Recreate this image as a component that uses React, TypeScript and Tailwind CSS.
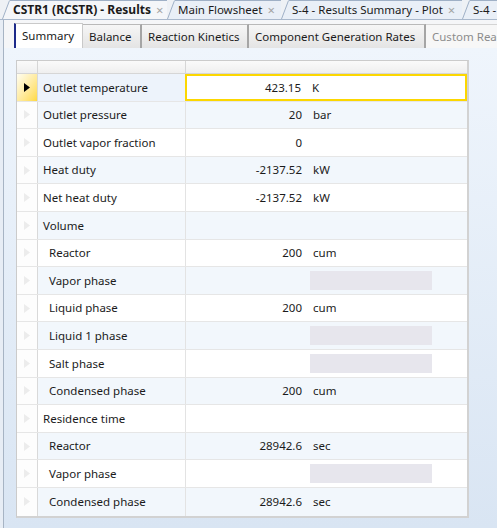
import React from 'react';

type Row = {
  label: string;
  sub?: boolean;
  value?: string;
  unit?: string;
  blank?: boolean;
};

const rows: Row[] = [
  { label: 'Outlet temperature', value: '423.15', unit: 'K' },
  { label: 'Outlet pressure', value: '20', unit: 'bar' },
  { label: 'Outlet vapor fraction', value: '0' },
  { label: 'Heat duty', value: '-2137.52', unit: 'kW' },
  { label: 'Net heat duty', value: '-2137.52', unit: 'kW' },
  { label: 'Volume' },
  { label: 'Reactor', sub: true, value: '200', unit: 'cum' },
  { label: 'Vapor phase', sub: true, blank: true },
  { label: 'Liquid phase', sub: true, value: '200', unit: 'cum' },
  { label: 'Liquid 1 phase', sub: true, blank: true },
  { label: 'Salt phase', sub: true, blank: true },
  { label: 'Condensed phase', sub: true, value: '200', unit: 'cum' },
  { label: 'Residence time' },
  { label: 'Reactor', sub: true, value: '28942.6', unit: 'sec' },
  { label: 'Vapor phase', sub: true, blank: true },
  { label: 'Condensed phase', sub: true, value: '28942.6', unit: 'sec' },
];

const docTabs = [
  { title: 'CSTR1 (RCSTR) - Results', active: true, w: 'w-[165px]' },
  { title: 'Main Flowsheet', w: 'w-[114px]' },
  { title: 'S-4 - Results Summary - Plot', w: 'w-[181px]' },
  { title: 'S-4 - Results Summary - Table', w: 'w-[200px]' },
];

const formTabs = [
  { title: 'Summary', w: 'w-[69px]', active: true },
  { title: 'Balance', w: 'w-[59px]' },
  { title: 'Reaction Kinetics', w: 'w-[107px]' },
  { title: 'Component Generation Rates', w: 'w-[177px]' },
  { title: 'Custom Reactions', w: 'w-[110px]', disabled: true },
];

function Slant({ active }: { active?: boolean }) {
  return (
    <svg width="8" height="19" viewBox="0 0 8 19" className="shrink-0">
      <path d="M0 19 L7 1 L8 1 L8 19 Z" fill={active ? '#f4f6f9' : '#e9eff7'} />
      <path d="M0.5 19 L7.5 0.5" stroke="#9fb0c6" strokeWidth="1" fill="none" />
    </svg>
  );
}

function RowHead({ current }: { current?: boolean }) {
  return (
    <div
      className={`w-[21px] shrink-0 border-r border-[#d9d9d9] flex items-center justify-center ${
        current ? 'bg-gradient-to-br from-[#fffdf0] to-[#ffd93a]' : 'bg-[#fdfdfd]'
      }`}
    >
      <svg width="6" height="9" viewBox="0 0 6 9">
        <path d="M0 0 L6 4.5 L0 9 Z" fill={current ? '#000' : '#ececec'} />
      </svg>
    </div>
  );
}

export default function App() {
  return (
    <div className="w-[497px] h-[528px] overflow-hidden flex flex-col bg-[#f1f3f6] text-[#1b1b1b] font-['Noto_Sans',sans-serif] text-[11.5px]">
      {/* document tabs */}
      <div className="h-[20px] flex items-end border-b border-[#a9b8cc] bg-[#eef1f5] pl-[2px] overflow-hidden shrink-0">
        {docTabs.map((t) => (
          <div key={t.title} className={`flex items-end h-[19px] shrink-0 ${t.w}`}>
            <Slant active={t.active} />
            <div
              className={`flex-1 h-full flex items-center gap-[5px] pl-[3px] border-t border-[#9fb0c6] whitespace-nowrap ${
                t.active ? 'bg-[#f4f6f9] font-bold text-[12px]' : 'bg-[#e9eff7]'
              }`}
            >
              <span>{t.title}</span>
              <span className="text-[#a4a4a4] text-[13px] leading-none font-normal">×</span>
            </div>
          </div>
        ))}
      </div>

      {/* form frame */}
      <div className="flex-1 flex pl-[3px] bg-[#e7edf5]">
        <div className="flex-1 flex flex-col border-l border-[#a7b4c4]">
          <div className="h-[28px] flex items-end pl-[10px] bg-[#f5f6f8] shrink-0 overflow-hidden">
            {formTabs.map((t) => (
              <div
                key={t.title}
                className={`h-[24px] shrink-0 flex items-center pl-[6px] whitespace-nowrap border-t border-r ${t.w} ${
                  t.active
                    ? 'bg-white border-l-2 border-l-[#1d2a8a] border-t-[#c9c9c9] border-r-[#c9c9c9] h-[25px]'
                    : t.disabled
                    ? 'bg-[#f7f7f7] text-[#8c8c8c] border-[#d4d4d4]'
                    : 'bg-gradient-to-b from-[#f6f6f6] to-[#e4e4e4] border-[#b9b9b9] border-r-2 border-r-[#a5a5a5]'
                }`}
              >
                {t.title}
              </div>
            ))}
          </div>

          <div className="flex-1 bg-gradient-to-b from-[#eff5fc] to-[#d9e5f3] pl-[12px] pt-[12px]">
            <div className="w-[453px] border border-[#cbcbcb] border-r-2 border-b-2 border-r-[#d2d2d2] border-b-[#d2d2d2] bg-white flex flex-col">
              <div className="h-[13px] flex border-b border-[#d6d6d6] bg-gradient-to-b from-[#fafafa] to-[#efefef]">
                <div className="w-[21px] border-r border-[#d6d6d6]" />
                <div className="w-[148px] border-r border-[#d6d6d6]" />
                <div className="flex-1" />
              </div>
              {rows.map((r, i) => {
                const current = i === 0;
                const shaded = i % 2 === 1;
                return (
                  <div
                    key={i}
                    className={`h-[27.6px] flex border-b border-[#e6e6e6] last:border-b-0 ${shaded ? 'bg-[#f2f7fc]' : 'bg-white'}`}
                  >
                    <RowHead current={current} />
                    <div
                      className={`w-[148px] shrink-0 flex items-center border-r border-[#e3e3e3] ${
                        r.sub ? 'pl-[11px]' : 'pl-[5px]'
                      } ${current ? 'bg-[#edf3fb]' : ''}`}
                    >
                      {r.label}
                    </div>
                    <div
                      className={`flex-1 flex items-center ${
                        current ? 'border-2 border-[#fcd700] bg-white -ml-px' : ''
                      }`}
                    >
                      {r.blank ? (
                        <>
                          <span className="w-[124px] shrink-0" />
                          <span className="w-[122px] h-[19px] bg-[#e7e6ed]" />
                        </>
                      ) : (
                        <>
                          <span className={`shrink-0 text-right ${current ? 'w-[114px]' : 'w-[116px]'}`}>{r.value}</span>
                          <span className="pl-[11px]">{r.unit}</span>
                        </>
                      )}
                    </div>
                  </div>
                );
              })}
            </div>
          </div>
        </div>
      </div>
    </div>
  );
}
